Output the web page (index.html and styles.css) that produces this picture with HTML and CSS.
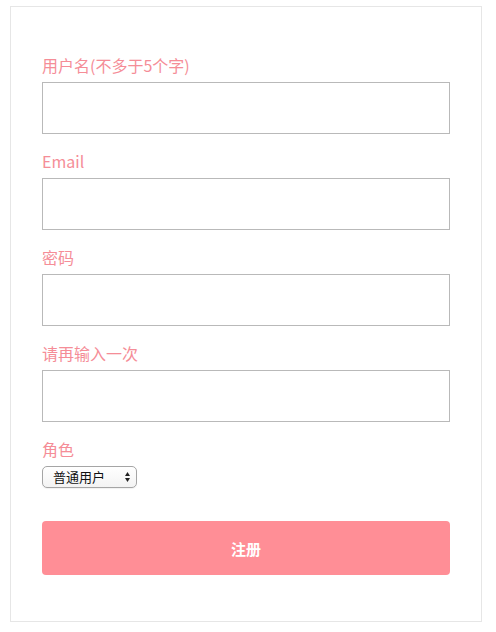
FILE: index.html
```html
<!DOCTYPE html>
<html lang="zh">
<head>
<meta charset="utf-8">
<title>注册</title>
<link rel="stylesheet" href="styles.css">
</head>
<body>
<form class="card">
  <div class="field">
    <label class="label">用户名(不多于5个字)</label>
    <input class="input" type="text">
  </div>
  <div class="field">
    <label class="label">Email</label>
    <input class="input" type="text">
  </div>
  <div class="field">
    <label class="label">密码</label>
    <input class="input" type="password">
  </div>
  <div class="field">
    <label class="label">请再输入一次</label>
    <input class="input" type="password">
  </div>
  <div class="field role">
    <label class="label">角色</label>
    <div class="select-wrap">
      <select class="select">
        <option>普通用户</option>
      </select>
      <svg class="select-arrows" width="5" height="10" viewBox="0 0 5 10"><path d="M2.5 0 L5 4 H0 Z M2.5 10 L5 6 H0 Z" fill="#222"/></svg>
    </div>
  </div>
  <button class="submit" type="button">注册</button>
</form>
</body>
</html>
```
FILE: styles.css
```css
* { box-sizing: border-box; }
html, body { margin: 0; padding: 0; background: #fff; }
body {
  font-family: "Noto Sans CJK SC", "Noto Sans", sans-serif;
}
.card {
  width: 472px;
  margin: 6px 0 0 10px;
  height: 616px;
  border: 1px solid #e6e6e6;
  padding: 48px 31px 0 31px;
  display: flex;
  flex-direction: column;
}
.field {
  display: flex;
  flex-direction: column;
  margin-bottom: 17px;
}
.label {
  font-size: 16px;
  line-height: 20px;
  font-weight: 400;
  color: #f58d97;
  margin-bottom: 7px;
}
.input {
  width: 408px;
  height: 52px;
  border: 1px solid #b9b9b9;
  border-radius: 0;
  margin: 0;
  outline: none;
  background: #fff;
}
.role { margin-bottom: 33px; }
.select-wrap {
  position: relative;
  width: 95px;
  height: 22px;
}
.select {
  display: block;
  appearance: none;
  -webkit-appearance: none;
  width: 95px;
  height: 22px;
  margin: 0;
  padding: 0 0 0 10px;
  border: 1px solid #a5a5a5;
  border-radius: 5px;
  background: linear-gradient(#ffffff, #f3f3f3);
  font-family: "Noto Sans CJK SC", sans-serif;
  font-size: 13px;
  font-weight: 400;
  line-height: 20px;
  color: #111;
  box-shadow: 0 1px 1px rgba(0,0,0,0.06);
}
.select-arrows {
  position: absolute;
  left: 83px;
  top: 6px;
  pointer-events: none;
}
.submit {
  width: 408px;
  height: 54px;
  border: none;
  border-radius: 4px;
  background: #ff8e96;
  color: #fff;
  font-family: "Noto Sans CJK SC", sans-serif;
  font-size: 15px;
  font-weight: 700;
  padding: 0;
  margin: 0;
}
```
